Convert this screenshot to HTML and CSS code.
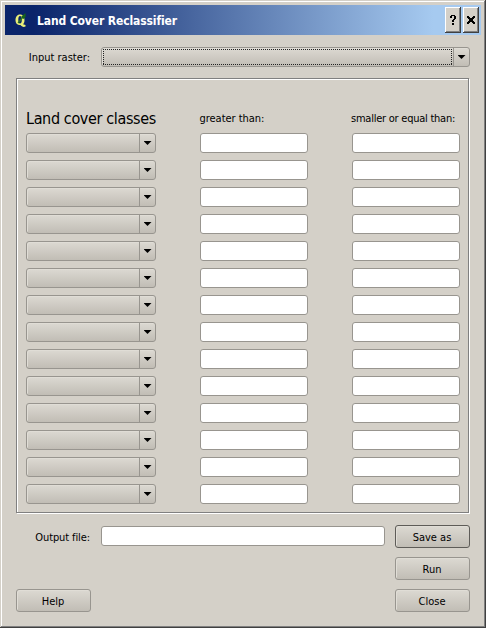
FILE: index.html
```html
<!DOCTYPE html>
<html lang="en">
<head>
<meta charset="utf-8">
<title>Land Cover Reclassifier</title>
<link rel="stylesheet" href="styles.css">
</head>
<body>
<main class="window">
  <header class="titlebar">
    <svg class="logo" width="14" height="18" viewBox="0 0 14 18">
      <path fill-rule="evenodd" d="M6 3.500C9 3.500 10.500 6 10.500 9C10.500 11 10 12.500 9 13.300L11.500 14V15.500C9.500 16.500 7.500 15.500 6.500 14C3 14 1.500 12 1.500 9C1.500 6 3 3.500 6 3.500zM6 5C4.800 5 4.300 6.500 4.300 9C4.300 11 4.800 12.500 6 12.500C7.300 12.500 7.800 11 7.800 9C7.800 6.500 7.300 5 6 5z" fill="#e9ee78"/>
      <path d="M4 12L9 6" stroke="#2f7620" stroke-width="1.2"/>
      <path d="M7 6L11.500 2L11.500 6L9.500 8z" fill="#17651b"/>
    </svg>
    <h1 class="title">Land Cover Reclassifier</h1>
    <button class="caption" aria-label="What's this"><svg width="6" height="10" viewBox="0 0 6 10" shape-rendering="crispEdges"><path d="M1 0h4v1h1v3H5v1H4v2H2V5h1V4h1V1H2v2H0V1h1zM2 8h2v2H2z"/></svg></button>
    <button class="caption" aria-label="Close window"><svg width="8" height="8" viewBox="0 0 8 8" shape-rendering="crispEdges"><path d="M0 0h2v1h1v1h2V1h1V0h2v2H7v1H6v2h1v1h1v2H6V7H5V6H3v1H2v1H0V6h1V5h1V3H1V2H0z"/></svg></button>
  </header>
  <div class="field-row">
    <span class="label input-label">Input raster:</span>
    <div class="combo raster"><span class="value focus"></span><span class="drop"></span></div>
  </div>
  <section class="frame">
    <span class="heading">Land cover classes</span>
    <span class="label greater">greater than:</span>
    <span class="label smaller">smaller or equal than:</span>
  </section>
  <div class="field-row output-row">
    <span class="label output-label">Output file:</span>
    <input class="field output" aria-label="Output file">
    <button class="button default">Save as</button>
  </div>
  <div class="actions run-row"><button class="button">Run</button></div>
  <div class="actions"><button class="button">Help</button><button class="button">Close</button></div>
</main>
<script src="rows.js"></script>
</body>
</html>
```
FILE: styles.css
```css
* { box-sizing: border-box; }
body {
  margin: 0;
  font: 11px/14px "DejaVu Sans Condensed", "DejaVu Sans", sans-serif;
  color: #000;
}
.window {
  width: 486px;
  height: 628px;
  overflow: hidden;
  background: #d4d0c8;
  padding: 5px 4px 0 5px;
  box-shadow: inset -1px -1px #404040, inset 1px 1px #d4d0c8, inset -2px -2px #808080, inset 2px 2px #fff;
}
.titlebar {
  height: 30px;
  width: 476px;
  display: flex;
  align-items: center;
  padding: 0 2px 0 9px;
  background: linear-gradient(90deg, #0a246a, #0a246a 6%, #a6caf0 90%);
}
.logo { display: block; }
.title {
  margin: 0 auto 0 9px;
  padding-top: 2px;
  color: #fff;
  font: bold 12px/18px "DejaVu Sans Condensed", "DejaVu Sans", sans-serif;
  letter-spacing: -0.12px;
  white-space: nowrap;
}
.caption {
  width: 16px;
  height: 26px;
  margin-left: 2px;
  padding: 0;
  border: 0;
  display: grid;
  place-items: center;
  background: #d4d0c8;
  box-shadow: inset -1px -1px #404040, inset 1px 1px #fff, inset -2px -2px #808080;
}
.field-row { display: flex; margin: 12px 0 0 11px; }
.label { white-space: nowrap; }
.field-row .label { width: 85px; padding: 4px 11px 0 0; text-align: right; }
.combo {
  display: flex;
  width: 130px;
  height: 20px;
  border: 1px solid #98958f;
  border-radius: 3px;
  background: linear-gradient(#dcd9d2, #c1bdb5);
  box-shadow: inset 1px 1px #e0ddd6;
}
.raster { width: 369px; }
.value { flex: 1; }
.focus {
  margin: 1px;
  background:
    repeating-linear-gradient(90deg, #222 0 1px, transparent 1px 2px) top / 100% 1px no-repeat,
    repeating-linear-gradient(90deg, #222 0 1px, transparent 1px 2px) bottom / 100% 1px no-repeat,
    repeating-linear-gradient(#222 0 1px, transparent 1px 2px) left / 1px 100% no-repeat,
    repeating-linear-gradient(#222 0 1px, transparent 1px 2px) right / 1px 100% no-repeat;
}
.drop {
  width: 16px;
  border-left: 1px solid #98958f;
  display: grid;
  place-items: center;
}
.drop::before {
  content: "";
  width: 8px;
  height: 4px;
  background: #000;
  clip-path: polygon(0 0, 100% 0, 50% 100%);
}
.frame {
  width: 453px;
  height: 435px;
  margin: 11px 0 0 11px;
  border: 1px solid #808080;
  box-shadow: 1px 1px #fff, inset 1px 1px #fff;
  padding: 28px 8px 0 9px;
  display: grid;
  grid-template-columns: 130px 108px 108px;
  grid-template-rows: 19px;
  grid-auto-rows: 20px;
  column-gap: 44px;
  row-gap: 7px;
  align-content: start;
}
.heading { font-size: 16px; line-height: 24px; letter-spacing: -0.36px; white-space: nowrap; }
.frame .label { padding-top: 5px; }
.greater { margin-left: -0.5px; letter-spacing: -0.03px; }
.smaller { margin-left: -1px; letter-spacing: -0.24px; }
.output-label { letter-spacing: -0.1px; }
.field {
  width: 108px;
  height: 20px;
  padding: 0 3px;
  border: 1px solid #98958f;
  border-radius: 3px;
  background: #fff;
}
.output { width: 284px; margin-top: 1px; }
.output-row { margin-top: 12px; }
.output-row .label { padding-top: 6px; }
.button {
  width: 75px;
  height: 23px;
  padding: 2px 1px 0 0;
  border: 1px solid #98958f;
  border-radius: 3px;
  background: linear-gradient(#dcd9d2, #c1bdb5);
  box-shadow: inset 1px 1px #e0ddd6;
  font: inherit;
  color: #000;
}
.default { margin-left: 10px; border-color: #5e5c58; }
.actions { display: flex; justify-content: space-between; width: 454px; margin: 9px 0 0 11px; }
.run-row { justify-content: flex-end; }
```
FILE: rows.js
```js
const frame = document.querySelector('.frame');
const row = `
  <div class="combo"><span class="value"></span><span class="drop"></span></div>
  <input class="field" aria-label="greater than">
  <input class="field" aria-label="smaller or equal than">`;
frame.insertAdjacentHTML('beforeend', row.repeat(14));
```
